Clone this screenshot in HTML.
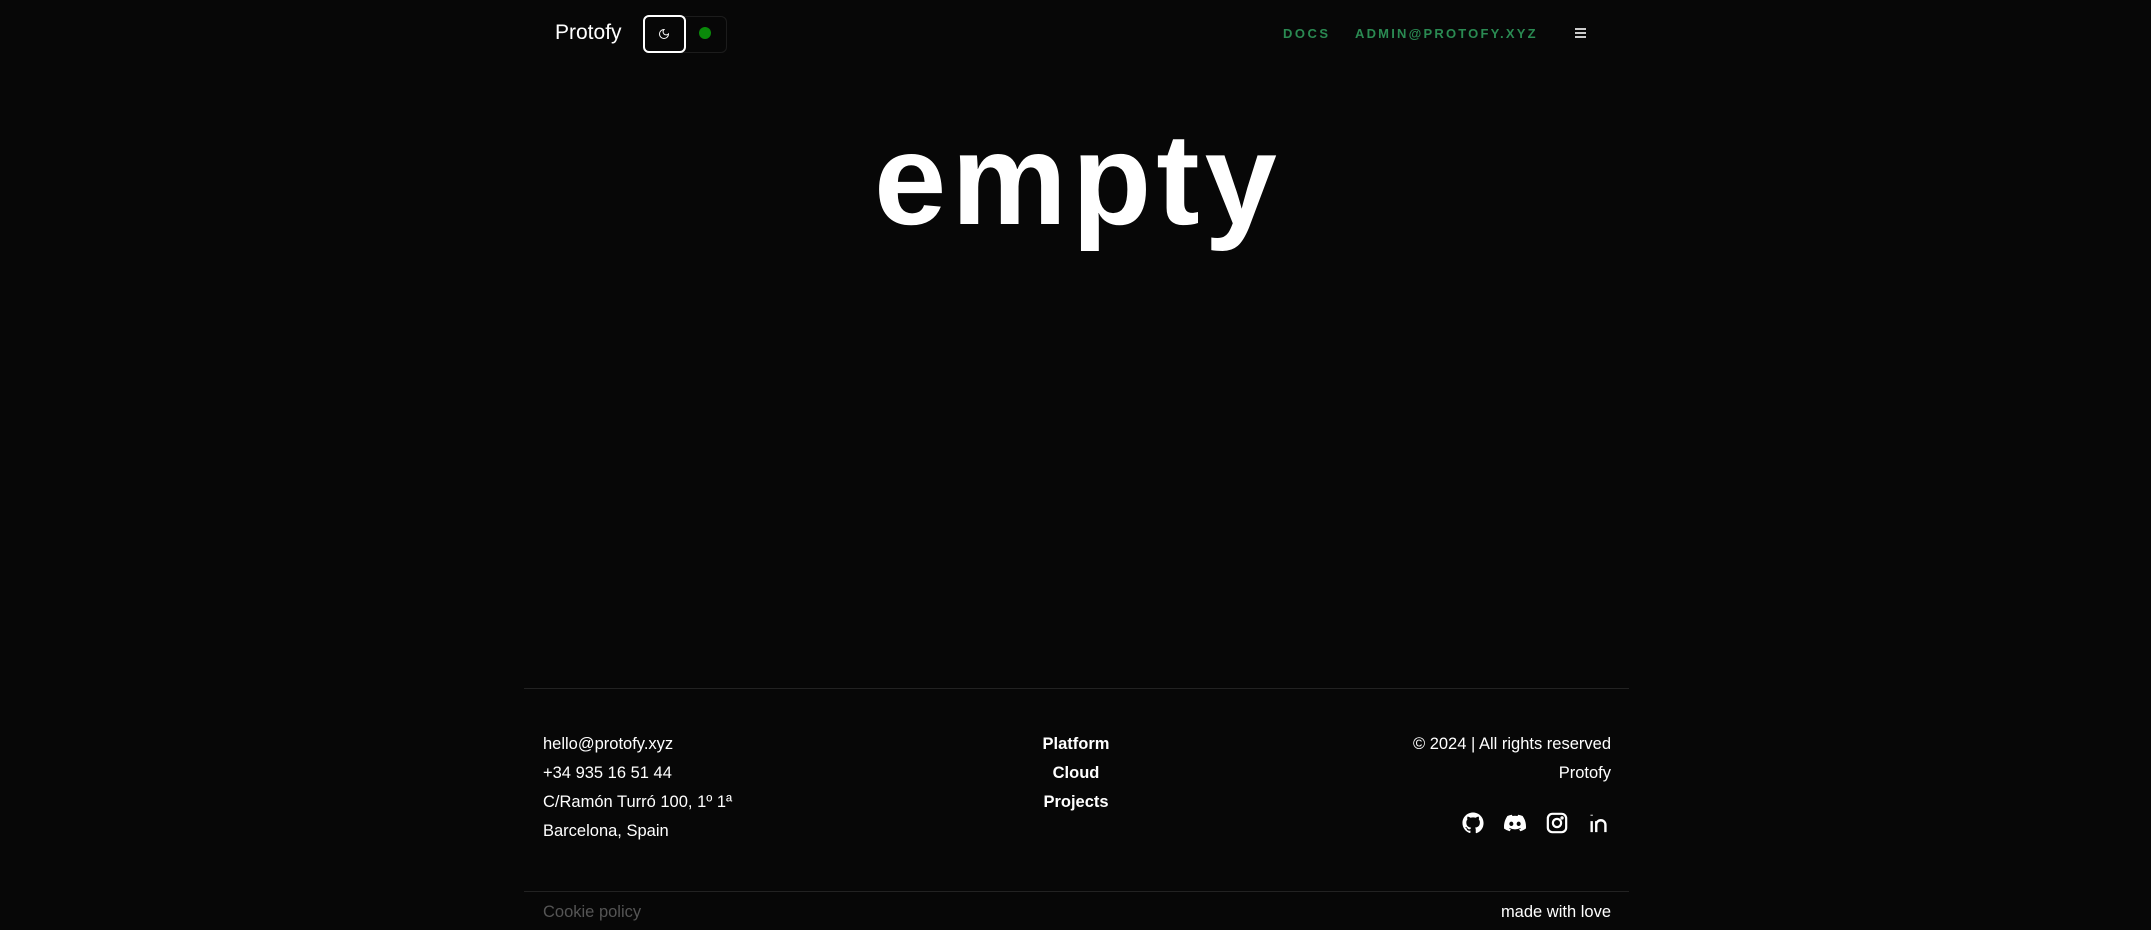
<!DOCTYPE html>
<html><head><meta charset="utf-8"><style>
*{margin:0;padding:0;box-sizing:border-box}
html,body{width:2151px;height:930px;background:#070707;overflow:hidden;font-family:"Liberation Sans",sans-serif;color:#fff}
.a{position:absolute;white-space:nowrap}
.f{font-size:16.5px;line-height:20px}
</style></head><body>
<div class="a" style="left:555px;top:20px;font-size:21px;line-height:26px">Protofy</div>
<div class="a" style="left:643px;top:16px;width:84px;height:37px;border:1px solid #1c1c1c;border-radius:6px"></div>
<div class="a" style="left:643px;top:15px;width:43px;height:38px;border:2px solid #fff;border-radius:6px"></div>
<svg class="a" style="left:658px;top:28px" width="12" height="12" viewBox="0 0 24 24" fill="none" stroke="#fff" stroke-width="2"><path d="M12 3a6 6 0 0 0 9 9 9 9 0 1 1-9-9Z"/></svg>
<div class="a" style="left:699px;top:27px;width:12px;height:12px;border-radius:50%;background:#0a8a0a"></div>
<div class="a" style="left:1283px;top:26px;font-size:13px;font-weight:bold;letter-spacing:2.5px;color:#2a8a52">DOCS</div>
<div class="a" style="left:1355px;top:26px;font-size:13px;font-weight:bold;letter-spacing:2.2px;color:#2a8a52">ADMIN@PROTOFY.XYZ</div>
<div class="a" style="left:1575px;top:28px;width:11px;height:10px;border-top:2px solid #ccc;border-bottom:2px solid #ccc"><div style="margin-top:2px;height:2px;background:#ccc"></div></div>
<div class="a" style="left:874px;top:114px;font-size:130px;line-height:130px;font-weight:bold;letter-spacing:5px">empty</div>
<div class="a" style="left:524px;top:688px;width:1105px;height:1px;background:#222"></div>
<div class="a f" style="left:543px;top:730px;line-height:29px">hello@protofy.xyz<br>+34 935 16 51 44<br>C/Ramón Turró 100, 1º 1ª<br>Barcelona, Spain</div>
<div class="a f" style="left:976px;width:200px;text-align:center;top:730px;line-height:29px;font-weight:bold">Platform<br>Cloud<br>Projects</div>
<div class="a f" style="right:540px;text-align:right;top:730px;line-height:29px">© 2024 | All rights reserved<br>Protofy</div>
<svg class="a" style="left:1462px;top:812px" width="22" height="22" viewBox="0 0 24 24" fill="#fff"><path d="M12 .5C5.6.5.5 5.6.5 12c0 5.1 3.3 9.4 7.9 10.9.6.1.8-.2.8-.6v-2c-3.2.7-3.900-1.5-3.900-1.5-.5-1.300-1.300-1.700-1.300-1.700-1-.7.1-.7.1-.7 1.2.1 1.8 1.2 1.8 1.2 1 1.8 2.7 1.3 3.4 1 .1-.8.4-1.300.7-1.600-2.600-.3-5.300-1.300-5.300-5.700 0-1.300.5-2.300 1.200-3.100-.1-.3-.5-1.500.1-3.100 0 0 1-.3 3.200 1.200a11 11 0 0 1 5.800 0c2.200-1.500 3.200-1.200 3.200-1.200.6 1.600.2 2.800.1 3.100.8.8 1.200 1.800 1.200 3.100 0 4.400-2.700 5.400-5.300 5.700.4.4.8 1.100.8 2.200v3.300c0 .3.2.7.8.6A11.5 11.5 0 0 0 23.5 12C23.5 5.6 18.4.5 12 .5Z"/></svg>
<svg class="a" style="left:1503px;top:812px" width="24" height="22" viewBox="0 0 24 24" fill="#fff"><path d="M20.3 4.4A19.8 19.8 0 0 0 15.4 3l-.6 1.3a18 18 0 0 0-5.6 0L8.6 3a19.7 19.7 0 0 0-4.9 1.4C.6 9 -.3 13.6.1 18.1A20 20 0 0 0 6.2 21l1.3-2.1c-.7-.3-1.4-.6-2-1l.5-.4a14 14 0 0 0 12 0l.5.4c-.6.4-1.3.7-2 1l1.3 2.1a20 20 0 0 0 6.1-3c.5-5.3-.9-9.8-3.6-13.7ZM8 15.3c-1.2 0-2.2-1.1-2.2-2.4S6.8 10.5 8 10.5s2.2 1.1 2.2 2.4-1 2.4-2.2 2.4Zm8 0c-1.2 0-2.2-1.1-2.2-2.4s1-2.4 2.2-2.4 2.2 1.1 2.2 2.4-1 2.4-2.2 2.4Z"/></svg>
<svg class="a" style="left:1546px;top:812px" width="22" height="22" viewBox="0 0 24 24" fill="none" stroke="#fff" stroke-width="2.4"><rect x="2" y="2" width="20" height="20" rx="5"/><circle cx="12" cy="12" r="4.5"/><circle cx="17.5" cy="6.5" r=".6" fill="#fff"/></svg>
<svg class="a" style="left:1588px;top:812px" width="22" height="22" viewBox="0 0 24 24" fill="none" stroke="#fff" stroke-width="2.6"><path d="M4 10v12M4 3v1M9 22V10M9 14a5 5 0 0 1 10 0v8"/></svg>
<div class="a" style="left:524px;top:891px;width:1105px;height:1px;background:#222"></div>
<div class="a f" style="left:543px;top:902px;color:#555">Cookie policy</div>
<div class="a f" style="right:540px;top:902px">made with love</div>
</body></html>
